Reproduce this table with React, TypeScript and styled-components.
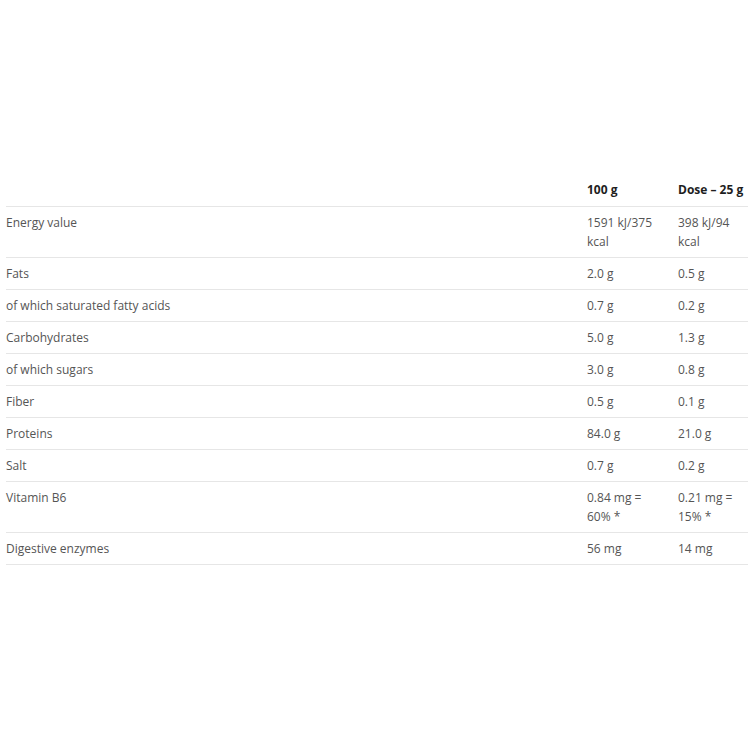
import React from "react";
import styled, { createGlobalStyle } from "styled-components";

const Global = createGlobalStyle`
  html, body { margin: 0; padding: 0; background: #fff; }
  body { font-family: "Open Sans", "Noto Sans", sans-serif; }
`;

const Page = styled.div`
  padding: 174px 2px 0 6px;
`;

const Table = styled.table`
  width: 742px;
  border-collapse: collapse;
  table-layout: fixed;
  font-size: 12px;
  line-height: 19px;
`;

const Col = styled.col<{ $w?: number }>`
  width: ${(p) => (p.$w ? `${p.$w}px` : "auto")};
`;

const Th = styled.th`
  text-align: left;
  font-weight: 700;
  color: #1e1e1e;
  white-space: nowrap;
  padding: 6px 6px 7px 0;
  border-bottom: 1px solid #e6e6e6;
`;

const Td = styled.td`
  text-align: left;
  vertical-align: top;
  color: #555;
  padding: 6px 14px 6px 0;
  border-bottom: 1px solid #e6e6e6;
  &:last-child { padding-right: 6px; }
`;

const rows: [string, string, string][] = [
  ["Energy value", "1591 kJ/375 kcal", "398 kJ/94 kcal"],
  ["Fats", "2.0 g", "0.5 g"],
  ["of which saturated fatty acids", "0.7 g", "0.2 g"],
  ["Carbohydrates", "5.0 g", "1.3 g"],
  ["of which sugars", "3.0 g", "0.8 g"],
  ["Fiber", "0.5 g", "0.1 g"],
  ["Proteins", "84.0 g", "21.0 g"],
  ["Salt", "0.7 g", "0.2 g"],
  ["Vitamin B6", "0.84 mg = 60% *", "0.21 mg = 15% *"],
  ["Digestive enzymes", "56 mg", "14 mg"],
];

export default function App() {
  return (
    <Page>
      <Global />
      <Table>
        <colgroup>
          <Col />
          <Col $w={91} />
          <Col $w={70} />
        </colgroup>
        <thead>
          <tr>
            <Th></Th>
            <Th>100 g</Th>
            <Th>Dose – 25 g</Th>
          </tr>
        </thead>
        <tbody>
          {rows.map(([a, b, c]) => (
            <tr key={a}>
              <Td>{a}</Td>
              <Td>{b}</Td>
              <Td>{c}</Td>
            </tr>
          ))}
        </tbody>
      </Table>
    </Page>
  );
}
